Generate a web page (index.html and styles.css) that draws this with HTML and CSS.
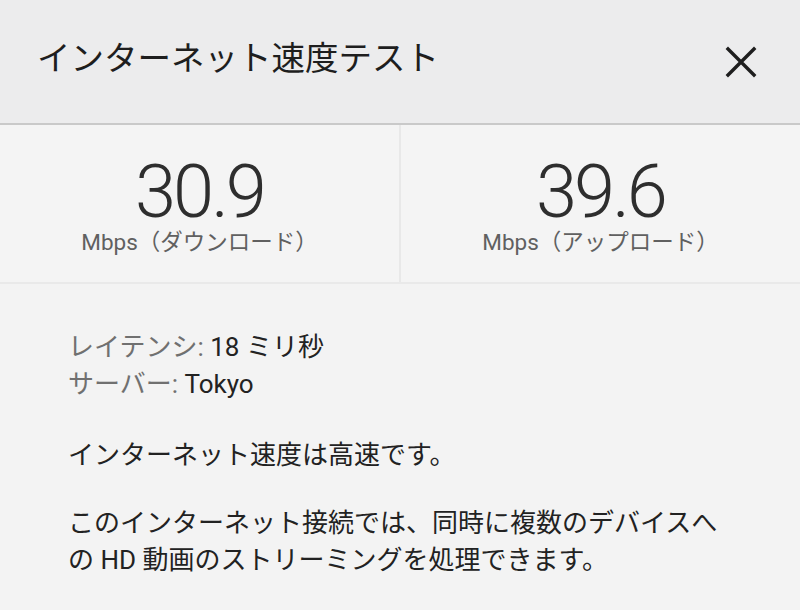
FILE: index.html
```html
<!DOCTYPE html>
<html lang="ja">
<head>
<meta charset="utf-8">
<title>インターネット速度テスト</title>
<link rel="stylesheet" href="styles.css">
</head>
<body>
<div class="page">
  <header class="header">
    <h1 class="title">インターネット速度テスト</h1>
    <button class="close" aria-label="閉じる">
      <svg width="32" height="32" viewBox="0 0 32 32"><path d="M3 3 L29 29 M29 3 L3 29" stroke="#1e1e1e" stroke-width="3.4" stroke-linecap="square" fill="none"/></svg>
    </button>
  </header>
  <section class="stats">
    <div class="stat">
      <div class="value">30.9</div>
      <div class="unit">Mbps（ダウンロード）</div>
    </div>
    <div class="stat">
      <div class="value">39.6</div>
      <div class="unit">Mbps（アップロード）</div>
    </div>
  </section>
  <section class="details">
    <div class="meta">
      <div class="row"><span class="label">レイテンシ:</span> 18 ミリ秒</div>
      <div class="row"><span class="label">サーバー:</span> Tokyo</div>
    </div>
    <p class="status">インターネット速度は高速です。</p>
    <p class="desc">このインターネット接続では、同時に複数のデバイスへの HD 動画のストリーミングを処理できます。</p>
  </section>
</div>
</body>
</html>
```
FILE: styles.css
```css
html, body {
  margin: 0;
  padding: 0;
  background: #f3f3f3;
}
body {
  font-family: Roboto, "Noto Sans CJK JP", sans-serif;
  color: #222;
}
.page {
  width: 800px;
  height: 610px;
  overflow: hidden;
  display: flex;
  flex-direction: column;
}
.header {
  height: 123px;
  background: #ececed;
  border-bottom: 2px solid #c9c9c9;
  box-shadow: 0 1px 2px rgba(0,0,0,0.08);
  display: flex;
  align-items: center;
  justify-content: space-between;
  padding: 0 42px 0 37px;
  flex: none;
}
.title {
  margin: 0 0 6px 0;
  font-size: 33.5px;
  font-weight: 400;
  color: #1e1e1e;
  line-height: 40px;
}
.close {
  border: 0;
  background: none;
  padding: 0;
  width: 34px;
  height: 34px;
  display: flex;
  align-items: center;
  justify-content: center;
}
.stats {
  display: flex;
  background: #f4f4f4;
  border-bottom: 2px solid #e9e9e9;
  flex: none;
}
.stat {
  flex: 1;
  display: flex;
  flex-direction: column;
  align-items: center;
  padding: 33px 0 25px;
}
.stat + .stat {
  border-left: 2px solid #e8e8e8;
}
.value {
  font-size: 74px;
  font-weight: 300;
  line-height: 68px;
  color: #2e2e2e;
  letter-spacing: -3px;
}
.unit {
  font-size: 22.5px;
  line-height: 30px;
  color: #606060;
  margin-top: 1px;
}
.details {
  padding: 45px 40px 0 68px;
  font-size: 26px;
  line-height: 37px;
}
.row {
  color: #222;
}
.label {
  color: #707070;
}
.status {
  margin: 34px 0 0;
  font-size: 26px;
}
.desc {
  margin: 31px 0 0;
  font-size: 26px;
  width: 660px;
}
```
